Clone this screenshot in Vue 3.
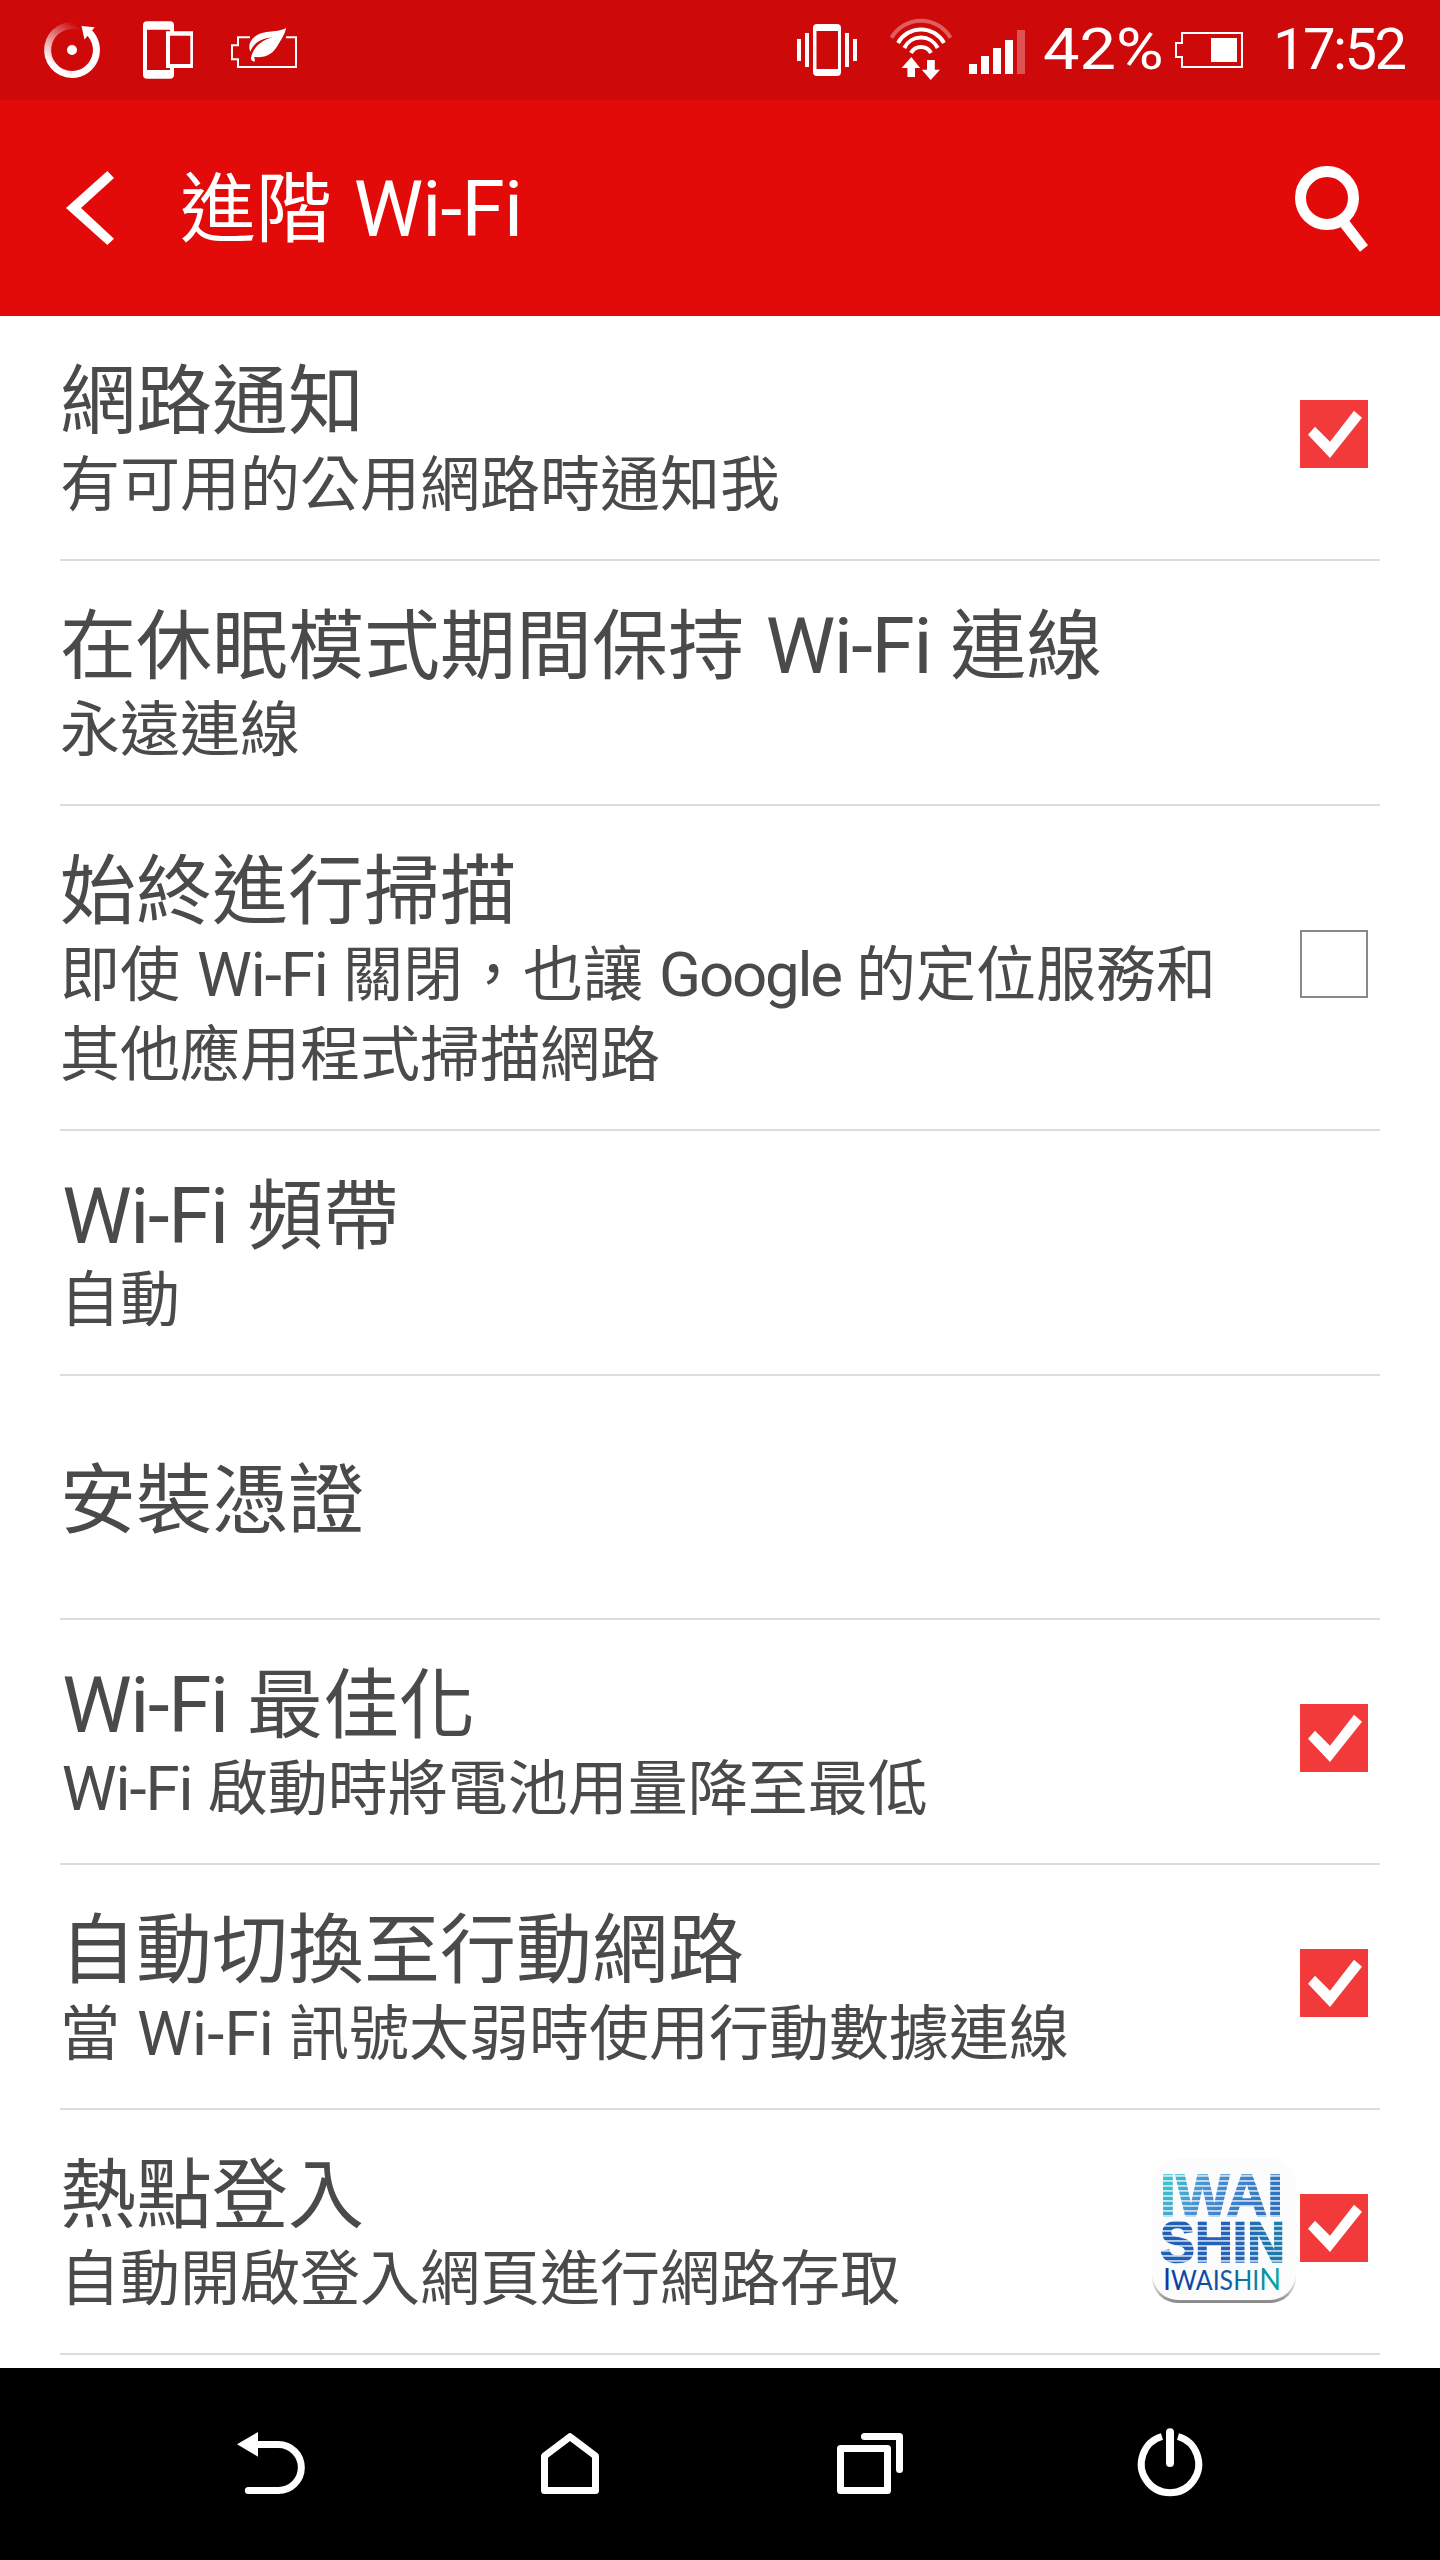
<script setup>
const items = [
  { title: '網路通知', lines: ['有可用的公用網路時通知我'], check: true },
  { title: '在休眠模式期間保持 Wi-Fi 連線', lines: ['永遠連線'] },
  { title: '始終進行掃描', lines: ['即使 Wi-Fi 關閉，也讓 Google 的定位服務和', '其他應用程式掃描網路'], check: false },
  { title: 'Wi-Fi 頻帶', lines: ['自動'] },
  { title: '安裝憑證', lines: [] },
  { title: 'Wi-Fi 最佳化', lines: ['Wi-Fi 啟動時將電池用量降至最低'], check: true },
  { title: '自動切換至行動網路', lines: ['當 Wi-Fi 訊號太弱時使用行動數據連線'], check: true, loose: true },
  { title: '熱點登入', lines: ['自動開啟登入網頁進行網路存取'], check: true, app: true },
]

// Splits a label into Latin and Chinese runs so that each can have its own face.
const runs = (text) =>
  text.split(/([A-Za-z-]+)/).filter(Boolean).map((t) => ({
    t,
    face: !/[A-Za-z]/.test(t) ? 'han' : t.length > 5 ? 'latin word' : 'latin',
  }))

const stripes = Array.from({ length: 18 }, (_, i) => 17.3 + i * 5)
</script>

<template>
  <div class="screen">
    <div class="status">
      <svg class="notif" width="300" height="100" viewBox="0 0 300 100">
        <defs>
          <linearGradient id="fade" gradientUnits="userSpaceOnUse" x1="52" y1="64" x2="80" y2="24">
            <stop offset="0" stop-color="#fff" />
            <stop offset="0.95" stop-color="#fff" stop-opacity="0" />
          </linearGradient>
        </defs>
        <path d="M72 74.5A24.5 24.5 0 0 0 88 31.5" fill="none" stroke="#fff" stroke-width="7" />
        <path d="M72 74.5A24.5 24.5 0 1 1 80 26.8" fill="none" stroke="url(#fade)" stroke-width="7" />
        <path d="M81.500 26L94.700 27.300L84.500 39.500Z" fill="#fff" />
        <circle cx="72" cy="50" r="5" fill="#fff" />
        <path fill="#fff" fill-rule="evenodd" d="M147 21.300H170Q174 21.300 174 25.300V31.300H193V68H174V74.700Q174 78.700 170 78.700H147Q143 78.700 143 74.700V25.300Q143 21.300 147 21.300ZM147 29.700V70H170V68H166V31.300H170V29.700ZM170 35.700V64H190.300V35.700Z" />
        <path d="M250 37.300H238V45.300H232V59.300H238V67H296V37.300H286" fill="none" stroke="#fff" stroke-width="2" />
        <path d="M286 27.700C279 34 256 27 249.600 44C249 47 249.500 50 250.500 51.500C253 44 261 38 272 37.500C262 40 253 47 251 58C250.500 60 252.500 62 255 61.500L254.300 57C266 58 273 54 278 45C282 38 285.500 33 286 27.700Z" fill="#fff" />
      </svg>
      <svg class="radio" width="236" height="100" viewBox="794 0 236 100" fill="#fff">
        <path fill-rule="evenodd" d="M817 24H837Q841 24 841 28V72Q841 76 837 76H817Q813 76 813 72V28Q813 24 817 24ZM816.500 31V69H838V31Z" />
        <path d="M797 39H801V61H797ZM805 33H809V67H805ZM845 33H849V67H845ZM853 39H857V61H853Z" />
        <g fill="none" stroke="#fff" stroke-width="4">
          <path d="M891.500 37.800A34 34 0 0 1 950.500 37.800" stroke-opacity=".35" />
          <path d="M898 43A26.300 26.300 0 0 1 944 43" />
          <path d="M904.300 48A18.600 18.600 0 0 1 937.700 48" />
          <path d="M911 53A11.300 11.300 0 0 1 931 53" />
        </g>
        <path d="M911.300 57L920.200 68H915V77H907.400V68H901.600ZM927 60H934.800V69.700H940L930.700 80L921.800 69.700H927Z" />
        <path d="M969 64H977V74H969ZM981 56H989V74H981ZM993 48H1001V74H993ZM1005 40H1013V74H1005Z" />
        <path d="M1017 30H1025V74H1017Z" fill-opacity=".3" />
      </svg>
      <span class="pct">42%</span>
      <svg class="batt" width="72" height="100" viewBox="1173 0 72 100">
        <path d="M1182 33H1242V67H1182V57H1176V43H1182Z" fill="none" stroke="#fff" stroke-width="2" />
        <path d="M1211 38H1237V62H1211Z" fill="#fff" />
      </svg>
      <span class="time">17:52</span>
    </div>

    <header class="bar">
      <svg width="180" height="216" viewBox="0 300 540 648">
        <path d="M322 513L342 534L243 624L342 716L322 735L198 624Z" fill="#fff" />
      </svg>
      <h1><span v-for="(r, i) in runs('進階 Wi-Fi')" :key="i" :class="r.face">{{ r.t }}</span></h1>
      <svg class="search" width="200" height="216" viewBox="0 -90 600 648">
        <circle cx="261" cy="204" r="79.500" fill="none" stroke="#fff" stroke-width="33" />
        <path d="M302 292L328 272L384 346L360 365Z" fill="#fff" />
      </svg>
    </header>

    <main class="list">
      <section v-for="item in items" :key="item.title" class="row" :class="{ single: !item.lines.length, loose: item.loose }">
        <div class="text">
          <div class="title"><span v-for="(r, i) in runs(item.title)" :key="i" :class="r.face">{{ r.t }}</span></div>
          <div v-for="line in item.lines" :key="line" class="sub"><span v-for="(r, i) in runs(line)" :key="i" :class="r.face">{{ r.t }}</span></div>
        </div>
        <svg v-if="item.app" class="app" width="144" height="148" viewBox="0 0 144 148">
          <defs>
            <linearGradient id="g1" x1="0" y1="0" x2="1" y2="0.300">
              <stop offset="0" stop-color="#35d6cd" /><stop offset=".45" stop-color="#4a90d2" /><stop offset="1" stop-color="#2f72c0" />
            </linearGradient>
            <linearGradient id="g2" x1="0" y1="0" x2="1" y2="0">
              <stop offset="0" stop-color="#1f5fb8" /><stop offset=".6" stop-color="#2563bb" /><stop offset="1" stop-color="#1a7fae" />
            </linearGradient>
            <linearGradient id="g3" x1="0" y1="0" x2="1" y2="0">
              <stop offset="0" stop-color="#0a3a9c" /><stop offset=".5" stop-color="#1055a5" /><stop offset="1" stop-color="#06aa9d" />
            </linearGradient>
            <linearGradient id="edge" x1="0" y1="0" x2="0" y2="1">
              <stop offset=".8" stop-color="#fcfcfc" /><stop offset=".9" stop-color="#c8c8c8" /><stop offset="1" stop-color="#858585" />
            </linearGradient>
          </defs>
          <rect x="0" y="2" width="144" height="143" rx="26" fill="url(#edge)" />
          <rect x="0.500" y="0" width="143" height="142" rx="26" fill="#fcfcfc" />
          <text class="logo top" x="8" y="58" textLength="123" lengthAdjust="spacingAndGlyphs">IWAI</text>
          <text class="logo low" x="8" y="104" textLength="125" lengthAdjust="spacingAndGlyphs">SHIN</text>
          <rect v-for="y in stripes" :key="y" x="6" :y="y" width="130" height="1.300" fill="#fcfcfc" />
          <text class="brand" x="11" y="131.500" textLength="118" lengthAdjust="spacingAndGlyphs"><tspan class="cap">I</tspan>WAISHI<tspan class="cap">N</tspan></text>
        </svg>
        <svg v-if="item.check === true" class="check" width="68" height="68" viewBox="0 0 68 68">
          <rect width="68" height="68" fill="#f23a3a" />
          <path d="M8 34.700L15 26.700L30 41.700L54 10.700L62 17.700L30 58Z" fill="#fff" />
        </svg>
        <span v-else-if="item.check === false" class="check empty"></span>
      </section>
    </main>

    <nav class="nav">
      <svg viewBox="-180 24 900 576">
        <path d="M171 253L234 216V290Z" fill="#fff" />
        <path d="M230 253.500H295A69 69 0 0 1 295 391.500H205" />
      </svg>
      <svg viewBox="720 24 900 576"><path d="M1093.500 391.500H1246.500V288L1170 230L1093.500 288Z" /></svg>
      <svg viewBox="-180 24 900 576">
        <path d="M181.500 265.500H322.500V391.500H181.500Z" />
        <path d="M253.500 229.500H358.500V328.500" />
      </svg>
      <svg viewBox="720 24 900 576">
        <path d="M1146 229.500A86 86 0 1 0 1194 229.500" stroke-linecap="butt" />
        <path d="M1170 217V309" stroke-width="24" />
      </svg>
    </nav>
  </div>
</template>

<style>
body { margin: 0; background: #fff; }
</style>

<style scoped>
.screen {
  width: 1440px;
  height: 2560px;
  display: flex;
  flex-direction: column;
  overflow: hidden;
  background: #fff;
  font-family: "Noto Sans CJK TC", sans-serif;
  color: #4a4a4a;
}
svg { display: block; flex: none; }
.status {
  flex: none;
  height: 100px;
  display: flex;
  background: #cd0909;
  color: #fff;
  font: 400 58px/99px Roboto, sans-serif;
}
.notif { margin-right: 494px; }
.pct { width: 130px; margin-left: 13px; transform: scaleX(1.12); transform-origin: 0 50%; }
.batt { margin-right: 28px; }
.time { letter-spacing: -2.6px; }
.bar {
  flex: none;
  height: 216px;
  display: flex;
  background: #e30b0a;
  color: #fff;
}
h1 { margin: 0; font-weight: 400; font-size: 76px; line-height: 206px; white-space: pre; }
.search { margin-left: auto; }
.latin {
  font-family: Roboto, sans-serif;
  font-size: 1.03em;
  line-height: 0;
  margin-left: .03em;
  letter-spacing: -.018em;
}
h1 .latin { letter-spacing: -.01em; }
.word { margin-left: .015em; letter-spacing: -.036em; }
.han { word-spacing: .03em; }
.loose .latin { letter-spacing: .002em; }
.list { flex: none; height: 2052px; overflow: hidden; }
.row {
  height: 243px;
  margin: 0 60px;
  border-bottom: 2px solid #dcdcdc;
  display: flex;
  align-items: center;
}
.row:nth-child(3) { height: 323px; }
.row.single { height: 242px; }
.text { flex: 1; white-space: pre; padding-bottom: 4px; }
.title { font-size: 76px; line-height: 89px; }
.sub { font-size: 60px; line-height: 80px; }
.single .text { padding-bottom: 6px; }
.check { margin: 0 12px 7px 0; }
.empty { width: 64px; height: 64px; border: 2px solid #888; }
.app { margin: 0 4px 0 0; overflow: visible; }
.logo { font: 700 60px "Liberation Sans", sans-serif; stroke-width: 1.6px; }
.top { fill: url(#g1); stroke: url(#g1); }
.low { font-size: 57px; fill: url(#g2); stroke: url(#g2); }
.brand { font: 400 27px Lato, sans-serif; fill: url(#g3); }
.cap { font-size: 31px; }
.nav {
  flex: none;
  height: 192px;
  display: flex;
  justify-content: center;
  background: #000;
}
.nav svg {
  width: 300px;
  height: 192px;
  fill: none;
  stroke: #fff;
  stroke-width: 21px;
  stroke-linecap: round;
  stroke-linejoin: round;
}
.nav svg path[fill] { stroke: none; }
.nav svg path[stroke-width] { stroke-width: 24px; }
</style>
